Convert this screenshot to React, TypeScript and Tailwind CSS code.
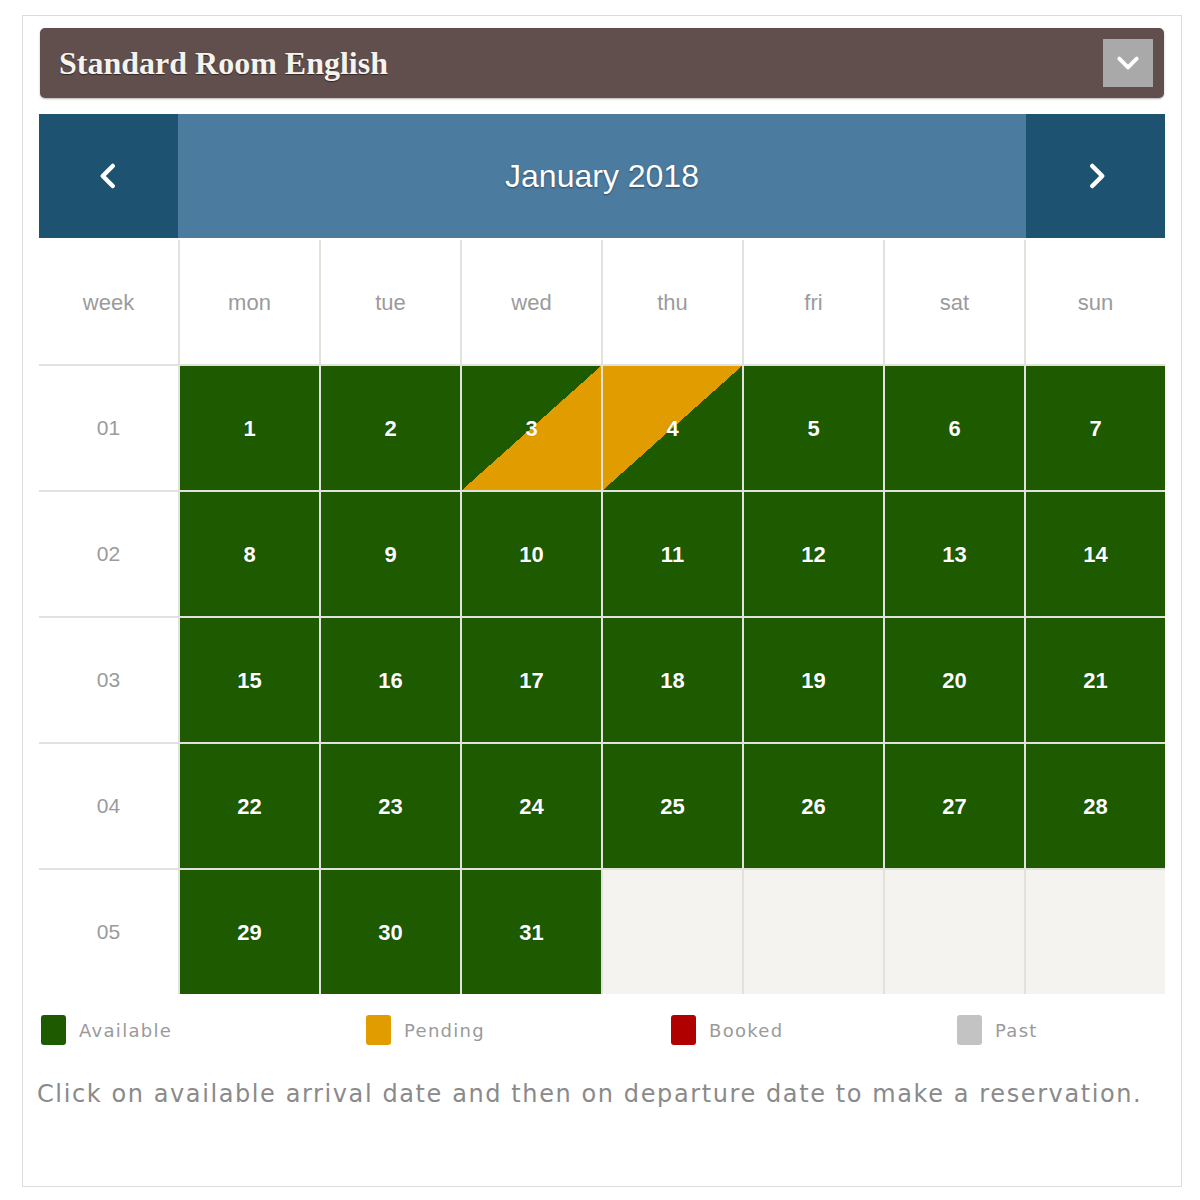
import { useState } from "react";

type CellKind = "available" | "arrive" | "depart" | "empty";

const weekdays = ["mon", "tue", "wed", "thu", "fri", "sat", "sun"];

// January 2018 starts on a monday
const weeks: { label: string; days: (number | null)[] }[] = [
  { label: "01", days: [1, 2, 3, 4, 5, 6, 7] },
  { label: "02", days: [8, 9, 10, 11, 12, 13, 14] },
  { label: "03", days: [15, 16, 17, 18, 19, 20, 21] },
  { label: "04", days: [22, 23, 24, 25, 26, 27, 28] },
  { label: "05", days: [29, 30, 31, null, null, null, null] },
];

function kindOf(day: number | null): CellKind {
  if (day === null) return "empty";
  if (day === 3) return "arrive";
  if (day === 4) return "depart";
  return "available";
}

const legend = [
  { label: "Available", color: "bg-[#1d5a00]" },
  { label: "Pending", color: "bg-[#e19d00]" },
  { label: "Booked", color: "bg-[#b00000]" },
  { label: "Past", color: "bg-[#c3c3c3]" },
];

function Chevron({ dir, className }: { dir: "left" | "right" | "down"; className?: string }) {
  const d =
    dir === "left"
      ? "M15 4 L7 12 L15 20"
      : dir === "right"
        ? "M9 4 L17 12 L9 20"
        : "M4 8 L12 16 L20 8";
  return (
    <svg viewBox="0 0 24 24" className={className} fill="none">
      <path d={d} stroke="white" strokeWidth={3.6} strokeLinecap="round" strokeLinejoin="round" />
    </svg>
  );
}

function DayCell({ day }: { day: number | null }) {
  const kind = kindOf(day);
  const bg =
    kind === "available"
      ? "bg-[#1d5a00]"
      : kind === "arrive"
        ? "bg-[linear-gradient(to_bottom_right,#1d5a00_50%,#e19d00_50%)]"
        : kind === "depart"
          ? "bg-[linear-gradient(to_bottom_right,#e19d00_50%,#1d5a00_50%)]"
          : "bg-[#f4f3ef]";
  return (
    <div
      className={`flex items-center justify-center font-['Liberation_Sans',Arial,sans-serif] text-[22px] font-bold text-white [text-shadow:0_0_1px_rgba(0,0,0,0.4)] ${bg}`}
    >
      {day}
    </div>
  );
}

export default function App() {
  const [month] = useState("January 2018");

  return (
    <div className="min-h-[1200px] w-[1200px] bg-white pt-[15px] pl-[22px]">
      <div className="w-[1160px] h-[1172px] border border-[#dcdcdc] bg-white px-[16px] pt-[12px]">
        {/* room select */}
        <div className="mx-px flex h-[70px] items-center justify-between rounded-[5px] bg-[#604f4d] pl-[19px] pr-[11px] shadow-[0_1px_2px_rgba(0,0,0,0.3)]">
          <span className="font-['Liberation_Serif',Georgia,serif] text-[32px] font-bold text-[#f6f3ee] [text-shadow:0_1px_1px_rgba(0,0,0,0.5)]">
            Standard Room English
          </span>
          <div className="flex h-[48px] w-[50px] items-center justify-center bg-[#a9a9a9]">
            <Chevron dir="down" className="h-[26px] w-[26px]" />
          </div>
        </div>

        {/* month header */}
        <div className="mt-[16px] flex h-[124px] bg-[#4b7b9f]">
          <button className="flex w-[139px] items-center justify-center bg-[#1d5370]">
            <Chevron dir="left" className="h-[30px] w-[30px]" />
          </button>
          <div className="flex flex-1 items-center justify-center font-['Liberation_Sans',Arial,sans-serif] text-[32px] text-white [text-shadow:0_1px_2px_rgba(0,0,0,0.4)]">
            {month}
          </div>
          <button className="flex w-[139px] items-center justify-center bg-[#1d5370]">
            <Chevron dir="right" className="h-[30px] w-[30px]" />
          </button>
        </div>

        {/* grid */}
        <div className="mt-[2px] grid grid-cols-8 grid-rows-[repeat(6,124px)] gap-[2px] bg-[#e2e2dc]">
          <div className="flex items-center justify-center bg-white font-['Liberation_Sans',Arial,sans-serif] text-[22px] text-[#9b9b9b]">
            week
          </div>
          {weekdays.map((w) => (
            <div
              key={w}
              className="flex items-center justify-center bg-white font-['Liberation_Sans',Arial,sans-serif] text-[22px] text-[#9b9b9b]"
            >
              {w}
            </div>
          ))}
          {weeks.map((wk) => [
            <div
              key={wk.label}
              className="flex items-center justify-center bg-white font-['Liberation_Sans',Arial,sans-serif] text-[21px] text-[#9b9b9b]"
            >
              {wk.label}
            </div>,
            ...wk.days.map((d, i) => <DayCell key={`${wk.label}-${i}`} day={d} />),
          ])}
        </div>

        {/* legend */}
        <div className="mt-[21px] grid grid-cols-[325px_305px_286px_1fr] pl-[2px] font-['DejaVu_Sans',Verdana,sans-serif] text-[18px] tracking-[1.3px] text-[#9a9a9a]">
          {legend.map((l) => (
            <div key={l.label} className="flex items-center gap-[13px]">
              <span className={`h-[30px] w-[25px] rounded-[3px] ${l.color}`} />
              <span>{l.label}</span>
            </div>
          ))}
        </div>

        <p className="mt-[31px] -ml-[2px] font-['DejaVu_Sans',Verdana,sans-serif] text-[24px] tracking-[1.6px] text-[#8a8a8a]">
          Click on available arrival date and then on departure date to make a reservation.
        </p>
      </div>
    </div>
  );
}
